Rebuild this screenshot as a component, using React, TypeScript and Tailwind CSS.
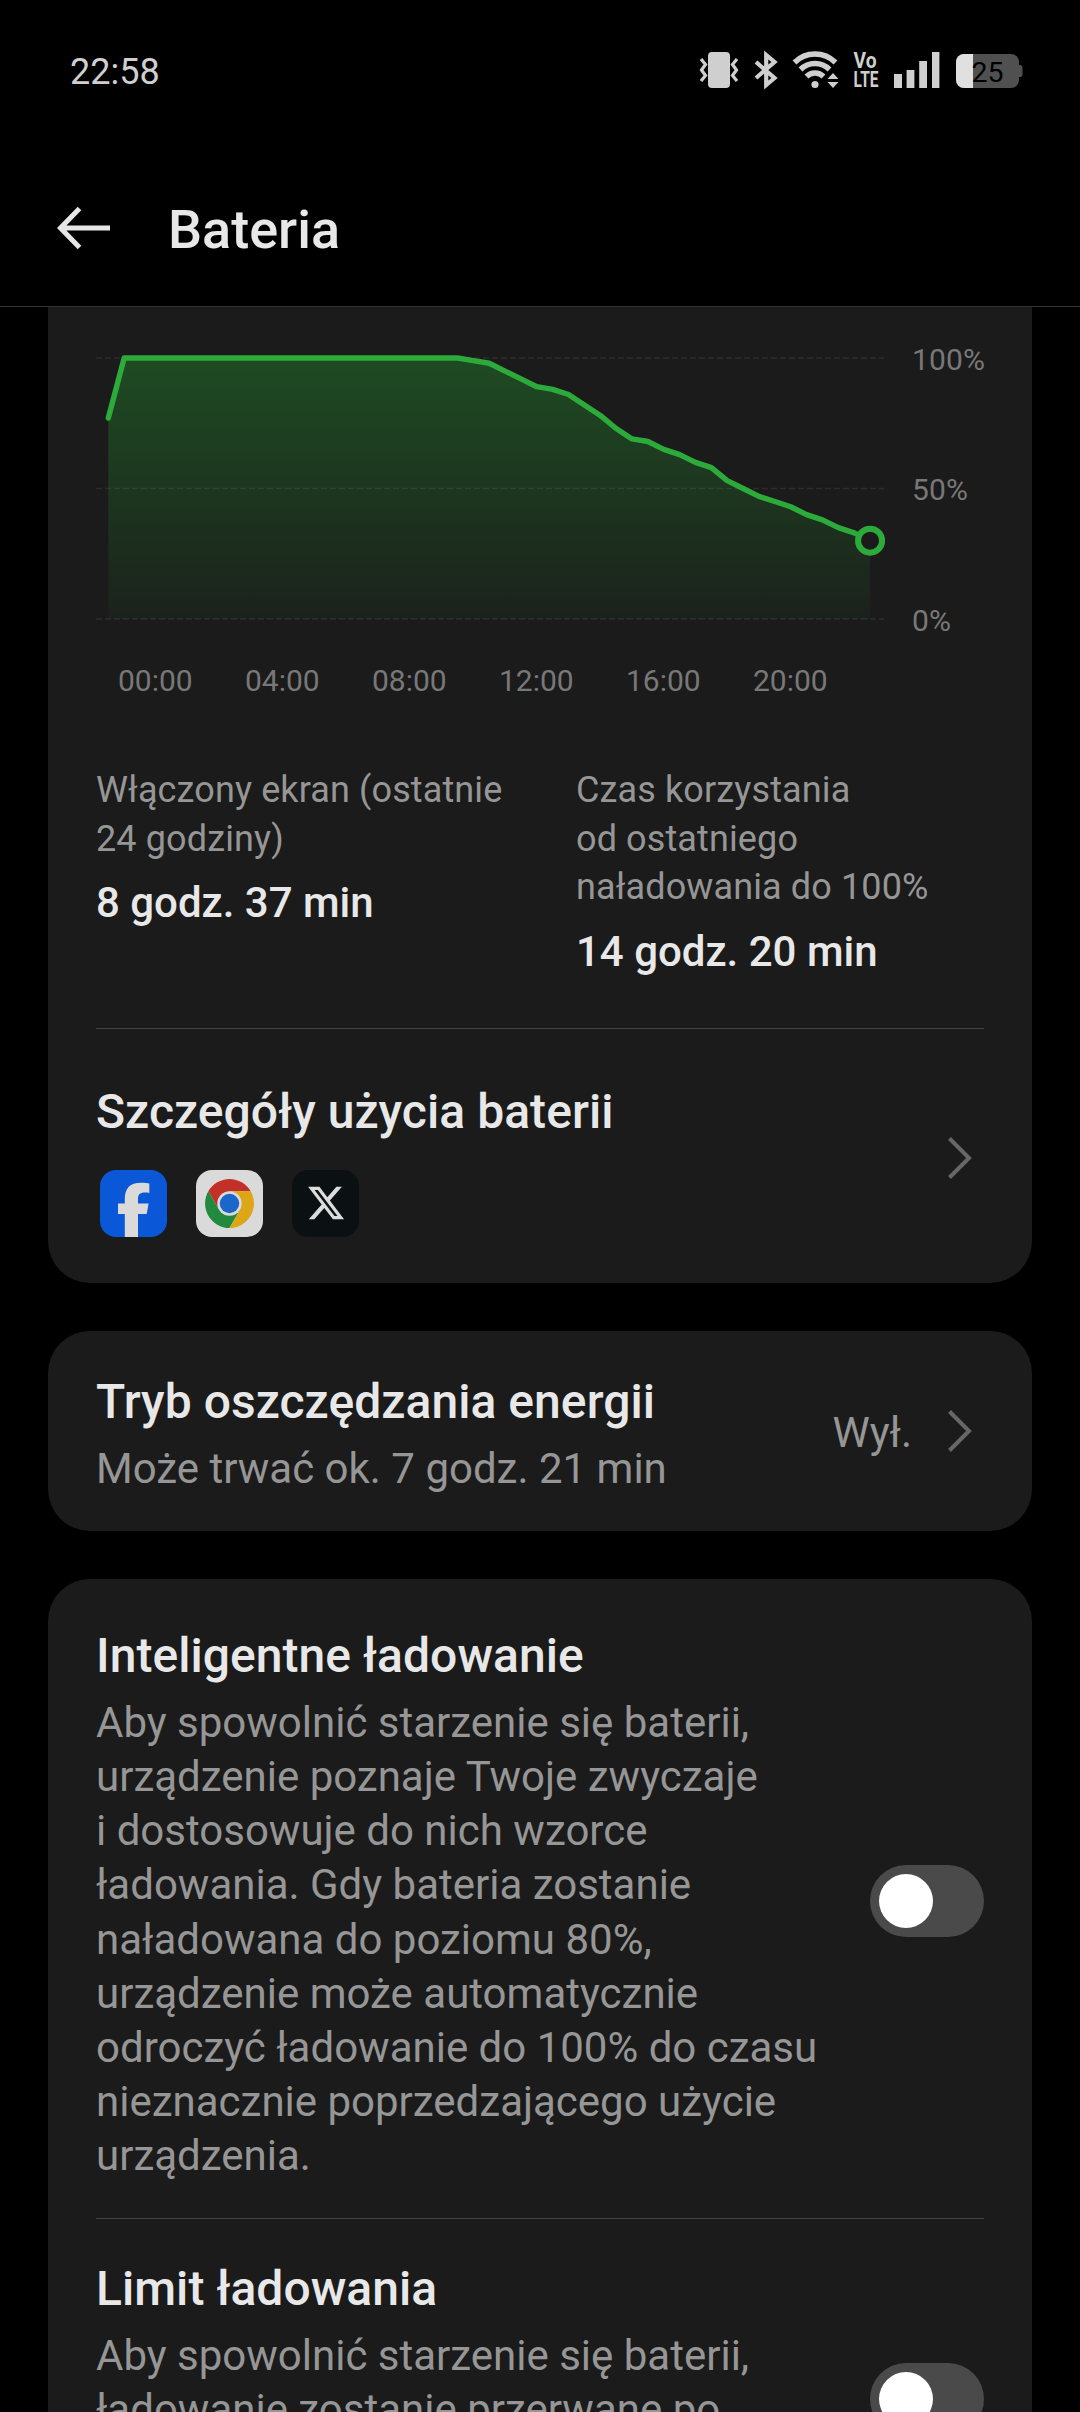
import type { ReactNode } from "react";
import { FaXTwitter } from "react-icons/fa6";

// battery level in percent, one sample every half hour
const LEVELS = [
  77, ...Array(22).fill(100), 99, 98, 95, 92, 89, 88, 86, 82, 78, 73, 69, 68, 65, 63, 60,
  58, 53, 50, 47, 45, 43, 40, 38, 35, 33, 30,
];

const HOURS = ["00:00", "04:00", "08:00", "12:00", "16:00", "20:00"];

const px = (i: number) => 12.3 + i * 15.87;
const py = (v: number) => 20 + (100 - v) * 2.61;

const SMART_TEXT = `Aby spowolnić starzenie się baterii,
urządzenie poznaje Twoje zwyczaje
i dostosowuje do nich wzorce
ładowania. Gdy bateria zostanie
naładowana do poziomu 80%,
urządzenie może automatycznie
odroczyć ładowanie do 100% do czasu
nieznacznie poprzedzającego użycie
urządzenia.`;

const LIMIT_TEXT = `Aby spowolnić starzenie się baterii,
ładowanie zostanie przerwane po`;

export default function App() {
  return (
    <div className="flex h-[2412px] w-[1080px] flex-col overflow-hidden bg-black font-[Roboto,sans-serif] text-[#e8e8e8]">
      <StatusBar />

      <header className="flex h-[167px] shrink-0 items-center border-b border-[#333333] pt-[10px] pl-[57px]">
        <svg width="54" height="44" viewBox="0 0 54 44" fill="none" stroke="#e6e6e6" strokeWidth="5">
          <path d="M4 22H53M22.5 2.5L3.5 22L22.5 41.5" />
        </svg>
        <h1 className="ml-[57px] pt-1 text-[54px] leading-[64px] font-medium">Bateria</h1>
      </header>

      <main className="flex flex-col gap-12 px-12">
        <section className="h-[976px] shrink-0 rounded-b-[42px] bg-[#1b1b1b] px-12 pt-[31px]">
          <Chart />

          <div className="mt-[67px] flex">
            <Stat label={"Włączony ekran (ostatnie\n24 godziny)"} value="8 godz. 37 min" />
            <Stat label={"Czas korzystania\nod ostatniego\nnaładowania do 100%"} value="14 godz. 20 min" />
          </div>

          <div className="mt-[51px] h-px bg-[#424242]" />

          <div className="mt-[55px] flex items-center justify-between">
            <div>
              <Title>Szczegóły użycia baterii</Title>
              <div className="mt-[30px] ml-1 flex gap-[29px]">
                <FacebookIcon />
                <ChromeIcon />
                <div className="flex size-[67px] items-center justify-center rounded-2xl bg-[#0b1013]">
                  <FaXTwitter className="size-10 text-[#dcdcdc]" />
                </div>
              </div>
            </div>
            <Chevron className="mb-1" />
          </div>
        </section>

        <section className="flex h-[200px] shrink-0 items-center justify-between rounded-[42px] bg-[#1b1b1b] px-12">
          <div className="pt-2">
            <Title>Tryb oszczędzania energii</Title>
            <p className="mt-3 text-[42px] leading-[54px] text-[#969696]">Może trwać ok. 7 godz. 21 min</p>
          </div>
          <div className="flex items-center">
            <span className="mr-[35px] pt-1 text-[42px] leading-[54px] text-[#969696]">Wył.</span>
            <Chevron />
          </div>
        </section>

        <section className="h-[1000px] shrink-0 rounded-t-[42px] bg-[#1b1b1b] px-12">
          <div className="flex h-[639px] justify-between pt-[49px]">
            <div>
              <Title>Inteligentne ładowanie</Title>
              <Body>{SMART_TEXT}</Body>
            </div>
            <Toggle className="mt-[237px]" />
          </div>
          <div className="h-px bg-[#424242]" />
          <div className="flex justify-between pt-[42px]">
            <div>
              <Title>Limit ładowania</Title>
              <Body>{LIMIT_TEXT}</Body>
            </div>
            <Toggle className="mt-[102px]" />
          </div>
        </section>
      </main>
    </div>
  );
}

function Title({ children }: { children: ReactNode }) {
  return <h2 className="text-[48px] leading-[56px] font-medium tracking-[0.05px]">{children}</h2>;
}

function Body({ children }: { children: ReactNode }) {
  return (
    <p className="mt-3 text-[42px] leading-[54.15px] whitespace-pre text-[#969696]">{children}</p>
  );
}

function Stat({ label, value }: { label: string; value: string }) {
  return (
    <div className="w-[480px] shrink-0">
      <p className="text-[36px] leading-[48.6px] tracking-[0.12px] whitespace-pre text-[#969696]">{label}</p>
      <p className="mt-[15px] text-[42px] leading-[50px] font-medium">{value}</p>
    </div>
  );
}

function Toggle({ className }: { className: string }) {
  return (
    <button
      type="button"
      role="switch"
      aria-checked={false}
      className={`flex h-[72px] w-[114px] shrink-0 items-center rounded-full bg-[#4a4a4a] px-[9px] ${className}`}
    >
      <span className="size-[54px] rounded-full bg-white" />
    </button>
  );
}

function Chevron({ className = "" }: { className?: string }) {
  return (
    <svg
      className={`mr-[11px] ${className}`}
      width="26"
      height="44"
      viewBox="0 0 26 44"
      fill="none"
      stroke="#676767"
      strokeWidth="4"
    >
      <path d="M2.5 2.5L22 22L2.5 41.5" />
    </svg>
  );
}

function Chart() {
  const line = LEVELS.map((v, i) => `${i ? "L" : "M"}${px(i)} ${py(v)}`).join("");
  const last = LEVELS.length - 1;
  return (
    <div>
      <div className="flex">
        <svg className="shrink-0" width="800" height="290" viewBox="0 0 800 290" fill="none">
          <defs>
            <linearGradient id="level" x1="0" y1="20" x2="0" y2="281" gradientUnits="userSpaceOnUse">
              <stop offset="0" stopColor="#24a030" stopOpacity="0.36" />
              <stop offset="1" stopColor="#24a030" stopOpacity="0.05" />
            </linearGradient>
          </defs>
          <path d={`${line}V281H${px(0)}Z`} fill="url(#level)" />
          {[100, 50, 0].map((v) => (
            <path key={v} d={`M0 ${py(v)}H788`} stroke="#fff" strokeOpacity="0.08" strokeWidth="1.5" strokeDasharray="6 3" />
          ))}
          <path d={line} stroke="#2dab3a" strokeWidth="5.4" strokeLinecap="round" strokeLinejoin="round" />
          <circle cx={px(last)} cy={py(LEVELS[last])} r="12" fill="#1b1b1b" stroke="#2dab3a" strokeWidth="6" />
        </svg>
        <div className="ml-4 flex h-[301px] flex-col justify-between pt-[4px] text-[30px] leading-[36px] tracking-[0.1px] text-[#787878]">
          <span>100%</span>
          <span className="-mt-px">50%</span>
          <span>0%</span>
        </div>
      </div>
      <div className="mt-6 flex pl-[22px] text-[30px] leading-[36px] text-[#787878]">
        {HOURS.map((h) => (
          <span key={h} className="w-[127px]">{h}</span>
        ))}
      </div>
    </div>
  );
}

function StatusBar() {
  return (
    <div className="flex h-[140px] shrink-0 items-center justify-between pr-[56px] pl-[70px]">
      <span className="pt-[3px] text-[36px] leading-[42px] text-[#cfcfcf]">22:58</span>
      <svg width="328" height="44" viewBox="696 48 328 44" fill="#cfcfcf">
        {/* vibrate */}
        <rect x="708" y="52" width="22" height="36" rx="4" />
        <g fill="none" stroke="#cfcfcf" strokeWidth="3.2">
          <path d="M701 59L705.5 64.5L701.5 70L705.5 75.5L701 81" />
          <path d="M737 59L732.5 64.5L736.5 70L732.5 75.5L737 81" />
        </g>
        {/* bluetooth */}
        <path
          d="M756 62L774.5 78L766.2 85V55L774.5 62L756 78"
          fill="none"
          stroke="#cfcfcf"
          strokeWidth="4.2"
        />
        {/* wifi */}
        <g fill="none" stroke="#cfcfcf" strokeWidth="5.4">
          <path d="M794.5 62.5A29 29 0 0 1 835.5 62.5" />
          <path d="M800.5 69.5A20.5 20.5 0 0 1 829.5 69.5" />
          <path d="M806.5 76.5A12 12 0 0 1 823.5 76.5" />
        </g>
        <circle cx="815" cy="84.5" r="3.6" />
        <path d="M833 73L838.5 79H827.5ZM833 88L838.5 82H827.5Z" stroke="#000" strokeWidth="3" paintOrder="stroke" />
        {/* volte */}
        <g className="font-[Roboto,sans-serif] font-bold" fontSize="21.5">
          <text x="853.5" y="68.3" textLength="23" lengthAdjust="spacingAndGlyphs">Vo</text>
          <text x="853.5" y="87" textLength="25" lengthAdjust="spacingAndGlyphs">LTE</text>
        </g>
        {/* signal */}
        <rect x="894" y="74" width="8" height="14" />
        <rect x="906.6" y="70" width="7.8" height="18" />
        <rect x="919.2" y="61" width="7.8" height="27" />
        <rect x="932" y="52" width="7.4" height="36" />
        {/* battery */}
        <path d="M1018 65H1020Q1022.5 65 1022.5 68V74Q1022.5 77 1020 77H1018Z" fill="#505050" />
        <rect x="956" y="54" width="63" height="34" rx="8" fill="#505050" />
        <path d="M973 54V88H964A8 8 0 0 1 956 80V62A8 8 0 0 1 964 54Z" fill="#e0e0e0" />
        <text x="971.5" y="82" fontSize="28.5" fill="#000" className="font-[Roboto,sans-serif]">25</text>
      </svg>
    </div>
  );
}

function FacebookIcon() {
  return (
    <svg width="67" height="67" viewBox="0 0 67 67">
      <rect width="67" height="67" rx="16" fill="#0a57d8" />
      <path
        d="M24.8 67V44H18V33.5H24.8V29.5C24.8 18 30 12.7 41 12.7C44.5 12.7 47.5 13 49.3 13.4V22.9C48 22.7 46.5 22.6 44.8 22.6C39.8 22.6 38 24.6 38 29.4V33.5H48.6L46.7 44H38V67Z"
        fill="#dadada"
      />
    </svg>
  );
}

function ChromeIcon() {
  return (
    <svg width="67" height="67" viewBox="0 0 67 67">
      <rect width="67" height="67" rx="16" fill="#dadada" />
      <g transform="translate(33.5 33.5)">
        <path d="M-21.2 -12.2A24.5 24.5 0 0 1 21.2 -12.2H0L-10.6 6.1Z" fill="#c23127" />
        <path d="M-21.2 -12.2A24.5 24.5 0 0 0 0 24.5L10.6 6.1L-10.6 6.1Z" fill="#228a3e" />
        <path d="M21.2 -12.2A24.5 24.5 0 0 1 0 24.5L10.6 6.1L0 -12.2Z" fill="#dca616" />
        <circle r="12.2" fill="#dadada" />
        <circle r="9.7" fill="#1b66ca" />
      </g>
    </svg>
  );
}
